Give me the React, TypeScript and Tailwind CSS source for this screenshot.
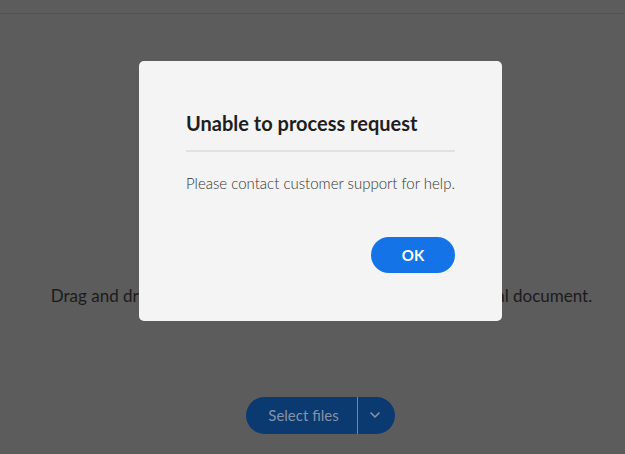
import { ChevronDown } from "lucide-react";

const App = () => {
  return (
    <div
      className="relative h-[454px] w-[625px] overflow-hidden bg-[#5c5c5c]"
      style={{ fontFamily: "Lato, 'Open Sans', sans-serif" }}
    >
      {/* Header strip */}
      <div className="h-[14px] border-b border-[#535353]" />

      {/* Page content (dimmed) */}
      <div className="flex flex-col items-center pl-[18px]">
        <p className="mt-[269px] whitespace-nowrap text-[17px] text-[#1b1b1b]">
          Drag and drop a PDF to fill and sign, then download your final document.
        </p>
        <div className="mt-[88px] ml-[-2px] flex h-[37px] items-stretch overflow-hidden rounded-full bg-[#0b3a70]">
          <span className="flex w-[111px] items-center justify-center pl-[4px] text-[15px] text-[#8493a7]">
            Select files
          </span>
          <span className="w-px bg-[#7a8696]" />
          <span className="flex w-[37px] items-center justify-center pr-[3px] text-[#8493a7]">
            <ChevronDown size={16} strokeWidth={2.5} />
          </span>
        </div>
      </div>

      {/* Dialog */}
      <div className="absolute left-[139px] top-[61px] flex h-[260px] w-[363px] flex-col rounded-[5px] bg-[#f4f4f4] px-[47px] pt-[49px]">
        <h2 className="text-[20px] font-bold leading-[26px] text-[#1e1e1e]">
          Unable to process request
        </h2>
        <div className="mt-[14px] h-[2px] bg-[#e1e1e1]" />
        <p className="mt-[22px] text-[15px] font-light leading-[18px] text-[#333333]">
          Please contact customer support for help.
        </p>
        <div className="mt-[45px] flex justify-end">
          <button className="flex h-[36px] w-[84px] items-center justify-center rounded-full bg-[#1473e6] text-[15px] font-bold text-white">
            OK
          </button>
        </div>
      </div>
    </div>
  );
};

export default App;
